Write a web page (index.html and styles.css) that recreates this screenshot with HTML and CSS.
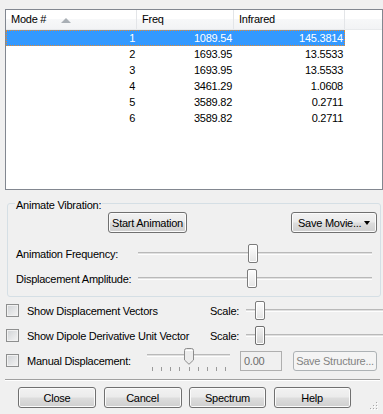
FILE: index.html
```html
<!DOCTYPE html>
<html>
<head>
<meta charset="utf-8">
<link rel="stylesheet" href="styles.css">
</head>
<body>
<div class="dlg">
  <div class="list">
    <div class="head">
      <div class="hc">Mode #<span class="sort"></span></div>
      <div class="hc">Freq</div>
      <div class="hc">Infrared</div>
      <div class="hc last"></div>
    </div>
    <div class="row sel"><span>1</span><span>1089.54</span><span>145.3814</span></div>
    <div class="row"><span>2</span><span>1693.95</span><span>13.5533</span></div>
    <div class="row"><span>3</span><span>1693.95</span><span>13.5533</span></div>
    <div class="row"><span>4</span><span>3461.29</span><span>1.0608</span></div>
    <div class="row"><span>5</span><span>3589.82</span><span>0.2711</span></div>
    <div class="row"><span>6</span><span>3589.82</span><span>0.2711</span></div>
  </div>

  <fieldset class="group">
    <legend>Animate Vibration:</legend>
    <div class="btnrow">
      <button class="btn start">Start Animation</button>
      <button class="btn movie">Save Movie...<span class="caret"></span></button>
    </div>
    <div class="srow">
      <span class="slbl">Animation Frequency:</span>
      <div class="slider wide"><div class="track"></div><div class="thumb" style="left:110px"></div></div>
    </div>
    <div class="srow">
      <span class="slbl">Displacement Amplitude:</span>
      <div class="slider wide"><div class="track"></div><div class="thumb" style="left:109px"></div></div>
    </div>
  </fieldset>

  <div class="checks">
    <div class="crow">
      <span class="cb"></span>
      <span class="clbl">Show Displacement Vectors</span>
      <span class="scale">Scale:</span>
      <div class="slider scl"><div class="track"></div><div class="thumb" style="left:9px"></div></div>
    </div>
    <div class="crow">
      <span class="cb"></span>
      <span class="clbl">Show Dipole Derivative Unit Vector</span>
      <span class="scale">Scale:</span>
      <div class="slider scl"><div class="track"></div><div class="thumb hot" style="left:9px"></div></div>
    </div>
    <div class="crow">
      <span class="cb"></span>
      <span class="clbl short">Manual Displacement:</span>
      <div class="slider man">
        <div class="track"></div>
        <svg class="pthumb" style="left:37px" width="10" height="17" viewBox="0 0 10 17"><path d="M0.5 2.5 Q0.5 0.5 2.5 0.5 H7.5 Q9.5 0.5 9.5 2.5 V12 L5 16.3 L0.5 12 Z" fill="#ececec" stroke="#8c8c8c"/><path d="M1.5 2.5 H8.5" stroke="#fff"/></svg>
        <div class="ticks"><i></i><i></i><i></i><i></i><i></i><i></i><i></i><i></i><i></i></div>
      </div>
      <span class="tbox">0.00</span>
      <button class="btn dis">Save Structure...</button>
    </div>
  </div>

  <div class="sep"></div>

  <div class="bottom">
    <button class="btn bb">Close</button>
    <button class="btn bb">Cancel</button>
    <button class="btn bb narrow">Spectrum</button>
    <button class="btn bb narrow">Help</button>
  </div>

  <svg class="grip" width="8" height="8" viewBox="0 0 8 8">
    <g fill="#a8a8a8">
      <rect x="6" y="0" width="1" height="1"/>
      <rect x="3" y="3" width="1" height="1"/>
      <rect x="6" y="3" width="1" height="1"/>
      <rect x="0" y="6" width="1" height="1"/>
      <rect x="3" y="6" width="1" height="1"/>
      <rect x="6" y="6" width="1" height="1"/>
    </g>
    <g fill="#ffffff">
      <rect x="7" y="1" width="1" height="1"/>
      <rect x="4" y="4" width="1" height="1"/>
      <rect x="7" y="4" width="1" height="1"/>
      <rect x="1" y="7" width="1" height="1"/>
      <rect x="4" y="7" width="1" height="1"/>
      <rect x="7" y="7" width="1" height="1"/>
    </g>
  </svg>
</div>
</body>
</html>
```

FILE: styles.css
```css
* { box-sizing: border-box; }
html, body { margin: 0; padding: 0; }
body {
  background: #f0f0f0;
  font-family: "Liberation Sans", Arial, sans-serif;
  font-size: 11px;
  letter-spacing: -0.25px;
  color: #000;
}
.dlg {
  position: relative;
  width: 383px;
  height: 414px;
  overflow: hidden;
  padding-top: 9px;
}

/* list view */
.list {
  margin-left: 5px;
  width: 378px;
  height: 181px;
  border: 1px solid #828790;
  background: #fff;
}
.head {
  display: grid;
  grid-template-columns: 131px 97px 111px 1fr;
  height: 20px;
  background: linear-gradient(#ffffff 0%, #ffffff 45%, #f7f8f9 46%, #f2f3f5 100%);
  border-bottom: 1px solid #e8eaec;
}
.hc {
  position: relative;
  padding-left: 5px;
  line-height: 19px;
  border-right: 1px solid #e3e5e8;
}
.hc.last { border-right: none; }
.sort {
  position: absolute;
  left: 55px;
  top: 8px;
  width: 0;
  height: 0;
  border-left: 5px solid transparent;
  border-right: 5px solid transparent;
  border-bottom: 5px solid #a9afb5;
}
.row {
  display: grid;
  grid-template-columns: 131px 97px 111px;
  width: 339px;
  height: 16px;
  line-height: 16px;
}
.row span { text-align: right; padding-right: 2px; }
.row.sel {
  background: #3399ff;
  color: #fff;
  outline: 1px dotted #e8882d;
  outline-offset: -1px;
}

/* group box */
.group {
  margin: 5px 0 0 7px;
  width: 374px;
  padding: 0 0 5px 8px;
  border: 1px solid #d5dfe5;
  border-radius: 3px;
  min-width: 0;
}
.group legend {
  padding: 4px 1px 0;
  margin-left: -1px;
  line-height: 13px;
}
.btnrow {
  display: flex;
  justify-content: space-between;
  padding: 0 3px 0 92px;
}
.btn {
  height: 21px;
  border: 1px solid #707070;
  border-radius: 3px;
  background: linear-gradient(#f2f2f2 0%, #ebebeb 48%, #dddddd 52%, #cfcfcf 100%);
  box-shadow: inset 0 0 0 1px #fbfbfb;
  font: inherit;
  letter-spacing: inherit;
  color: #000;
  padding: 0;
  margin: 0;
  text-align: center;
}
.start { width: 79px; }
.movie {
  width: 86px;
  display: flex;
  align-items: center;
  padding-left: 6px;
}
.caret {
  margin-left: 3px;
  width: 0;
  height: 0;
  border-left: 3.5px solid transparent;
  border-right: 3.5px solid transparent;
  border-top: 4px solid #000;
}
.srow {
  display: flex;
  align-items: center;
  height: 25px;
}
.btnrow + .srow { margin-top: 8px; }
.slbl { width: 122px; flex: none; }

.slider {
  position: relative;
  display: flex;
  align-items: center;
  height: 25px;
}
.slider.wide { flex: 1; margin-right: 8px; }
.track {
  width: 100%;
  height: 3px;
  border-top: 1px solid #b9b9b9;
  border-bottom: 1px solid #fdfdfd;
  background: #e0e0e0;
}
.thumb {
  position: absolute;
  top: 3px;
  width: 10px;
  height: 19px;
  border: 1px solid #7b7b7b;
  border-radius: 2px;
  background: linear-gradient(#fdfdfd 0%, #f1f1f1 50%, #e4e4e4 100%);
  box-shadow: inset 0 0 0 1px #ffffff;
}
.thumb.hot {
  background: linear-gradient(#f2f2f2 0%, #e2e2e2 50%, #d2d2d2 100%);
  border-color: #6f6f6f;
}

/* checkbox rows */
.checks { margin-top: 1px; }
.crow {
  display: flex;
  align-items: center;
  height: 25px;
  padding-left: 6px;
}
.cb {
  flex: none;
  width: 13px;
  height: 13px;
  border: 1px solid #8e8f8f;
  background: linear-gradient(135deg, #cfd2d5 0%, #e6e7e8 60%, #f4f4f4 100%);
  box-shadow: inset 0 0 0 1px #f1f1f1;
  margin-right: 8px;
}
.clbl { width: 183px; flex: none; white-space: nowrap; }
.clbl.short { width: 120px; }
.scale { width: 36px; flex: none; }
.slider.scl { flex: 1; margin-right: -6px; }
.slider.man { width: 83px; flex: none; height: 25px; align-items: flex-start; }
.slider.man .track { margin-top: 6px; }
.pthumb { position: absolute; top: 0; }
.ticks {
  position: absolute;
  left: 5px;
  top: 19px;
  width: 74px;
  display: flex;
  justify-content: space-between;
}
.ticks i {
  display: block;
  width: 1px;
  height: 4px;
  background: #9a9a9a;
}
.tbox {
  flex: none;
  margin-left: 10px;
  width: 42px;
  height: 20px;
  line-height: 18px;
  border: 1px solid #afafaf;
  padding-left: 3px;
  color: #6d6d6d;
}
.btn.dis {
  margin-left: 11px;
  width: 84px;
  height: 20px;
  border-color: #adb2b5;
  background: #f4f4f4;
  box-shadow: none;
  color: #838383;
}

.sep {
  margin: 6px 3px 0 5px;
  height: 2px;
  border-top: 1px solid #a0a0a0;
  border-bottom: 1px solid #ffffff;
}
.bottom {
  display: flex;
  gap: 7.5px;
  padding-left: 18px;
  margin-top: 6px;
}
.bb { width: 78px; }
.bb.narrow { width: 77px; }
.grip { position: absolute; right: 5px; bottom: 4px; }
```
